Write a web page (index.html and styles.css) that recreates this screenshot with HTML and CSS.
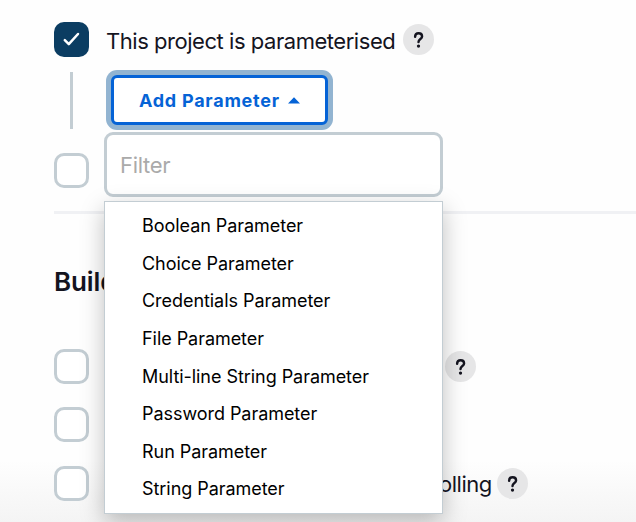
FILE: index.html
```html
<!DOCTYPE html>
<html lang="en">
<head>
<meta charset="utf-8">
<title>Project configuration</title>
<link rel="stylesheet" href="styles.css">
</head>
<body>
<main class="config">
  <div class="row">
    <span class="checkbox checked"><svg viewBox="0 0 35 35"><path d="M10.8 18.2 14.8 22.2 24 12"/></svg></span>
    <span class="label">This project is parameterised</span>
    <span class="help"><svg viewBox="0 0 32 32"><path d="M12.5 13.1C12.5 10.8 14 9.5 16.1 9.5S19.7 10.9 19.7 12.8C19.7 15.6 16 15.5 16 18.7"/><circle cx="16" cy="22.8" r="1.7"/></svg></span>
  </div>
  <div class="nested">
    <div class="dropdown">
      <button class="add">Add Parameter<svg viewBox="0 0 12 7"><path d="M0 6.5 6 0.3 12 6.5Z"/></svg></button>
      <div class="popup">
        <div class="filter">Filter</div>
        <ul class="menu">
          <li>Boolean Parameter</li>
          <li>Choice Parameter</li>
          <li>Credentials Parameter</li>
          <li>File Parameter</li>
          <li>Multi-line String Parameter</li>
          <li>Password Parameter</li>
          <li>Run Parameter</li>
          <li>String Parameter</li>
        </ul>
      </div>
    </div>
  </div>
  <div class="row throttle"><span class="checkbox"></span></div>
  <hr>
  <h2>Build</h2>
  <div class="row remote">
    <span class="checkbox"></span>
    <span class="help"><svg viewBox="0 0 32 32"><path d="M12.5 13.1C12.5 10.8 14 9.5 16.1 9.5S19.7 10.9 19.7 12.8C19.7 15.6 16 15.5 16 18.7"/><circle cx="16" cy="22.8" r="1.7"/></svg></span>
  </div>
  <div class="row"><span class="checkbox"></span></div>
  <div class="row polling">
    <span class="checkbox"></span>
    <span class="label">olling</span>
    <span class="help"><svg viewBox="0 0 32 32"><path d="M12.5 13.1C12.5 10.8 14 9.5 16.1 9.5S19.7 10.9 19.7 12.8C19.7 15.6 16 15.5 16 18.7"/><circle cx="16" cy="22.8" r="1.7"/></svg></span>
  </div>
</main>
</body>
</html>
```
FILE: styles.css
```css
* { box-sizing: border-box; }
body {
  margin: 0;
  height: 522px;
  overflow: hidden;
  background: linear-gradient(#fefefe 0 460px, #f4f4f4 522px);
  color: #14141f;
  font-family: Inter, "Liberation Sans", sans-serif;
}
.config { padding: 22px 0 0 54px; }
.row { display: flex; align-items: center; height: 35px; margin-bottom: 23.5px; }
.checkbox {
  flex: none;
  width: 35px;
  height: 35px;
  border: 3px solid #c3cdd3;
  border-radius: 10px;
  background: #fff;
}
.checked { border: 0; background: #0b3d62; }
.checked svg { display: block; fill: none; stroke: #fff; stroke-width: 2.5; stroke-linecap: round; stroke-linejoin: round; }
.label { margin: 3px 8px 0 17px; font-size: 22px; line-height: 30px; letter-spacing: -0.46px; white-space: nowrap; }
.help { flex: none; width: 31px; height: 31px; border-radius: 50%; background: #e6e6e7; }
.help svg { display: block; fill: none; stroke: #14141f; stroke-width: 2.5; stroke-linecap: round; }
.help circle { fill: #14141f; stroke: none; }
.nested {
  height: 57px;
  margin: -9px 0 24px 16px;
  border-left: 3px solid #c3cdd3;
  padding: 3px 0 0 38px;
}
.dropdown { position: relative; width: 217px; }
.add {
  display: flex;
  align-items: center;
  width: 217px;
  height: 50px;
  padding: 2px 0 0 25px;
  border: 3px solid #0563d6;
  border-radius: 6px;
  background: #fff;
  box-shadow: 0 0 0 5px #92b4d1;
  color: #0563d6;
  font: 700 18px/24px Inter, sans-serif;
  letter-spacing: 0.75px;
  white-space: nowrap;
}
.add svg { width: 12px; height: 7px; margin-left: 8px; fill: #0563d6; }
.popup { position: absolute; z-index: 2; top: 57px; left: -7px; width: 339px; }
.filter {
  height: 65px;
  padding: 0 13px;
  border: 3px solid #c3cdd3;
  border-radius: 9px;
  background: #fff;
  color: #aaa;
  font-size: 22px;
  letter-spacing: -0.3px;
  line-height: 61px;
}
.menu {
  height: 313px;
  margin: 4px 0 0;
  padding: 5.7px 0 0 37px;
  border: 1.5px solid #c3cdd3;
  background: #fff;
  box-shadow: 0 8px 22px rgba(0, 0, 0, 0.25);
  color: #000;
  list-style: none;
  font-size: 18px;
  letter-spacing: -0.05px;
  line-height: 37.6px;
  white-space: nowrap;
}
.menu li { height: 37.6px; }
.throttle { margin-bottom: 23px; }
hr { height: 3px; margin: 0; border: 0; background: #f0f1f4; }
h2 { margin: 50px 0; font-size: 26px; line-height: 35px; font-weight: 600; letter-spacing: -0.1px; }
.remote .help { margin-left: 356px; }
.polling .label { margin: 2px 5px 0 350px; }
```
